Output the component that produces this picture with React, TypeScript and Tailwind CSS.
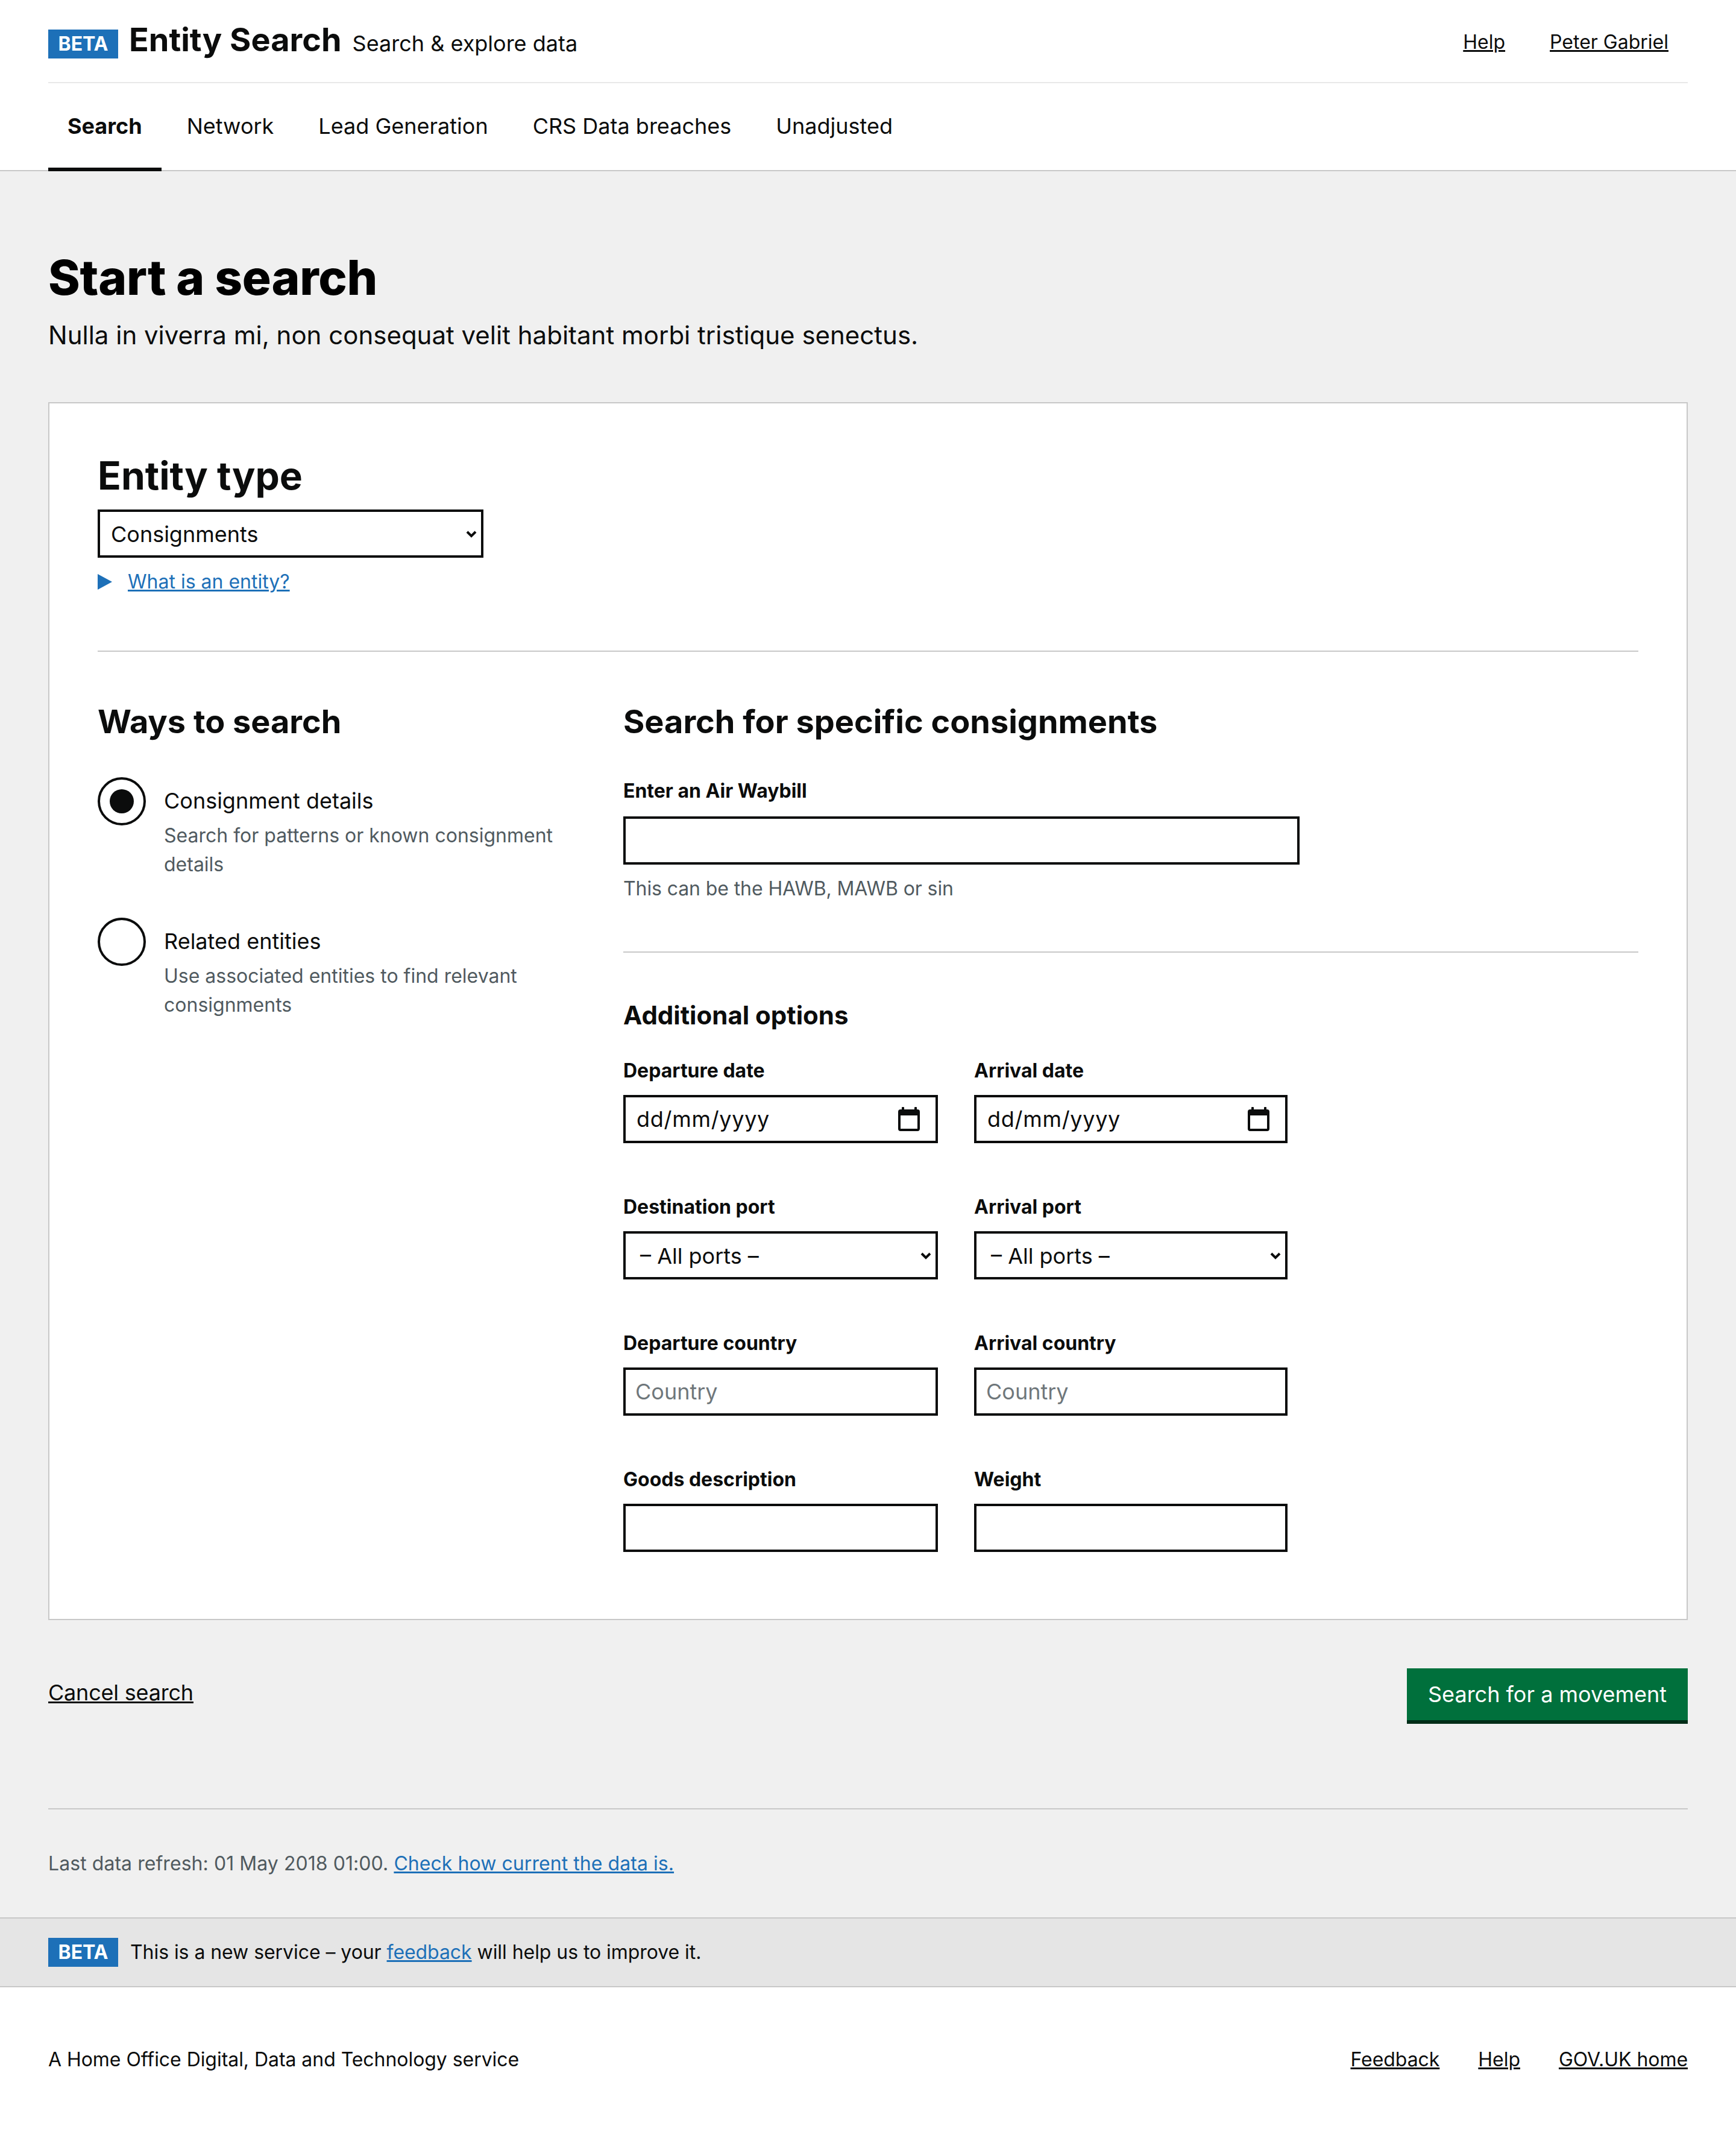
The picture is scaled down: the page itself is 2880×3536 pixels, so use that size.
import React from "react";

const Beta = () => (
  <span className="inline-flex h-[48px] w-[116px] shrink-0 items-center justify-center bg-[#1d70b8] text-[32px] font-bold leading-none text-white">BETA</span>
);

const Chevron = () => (
  <svg className="pointer-events-none h-[14px] w-[18px] shrink-0" viewBox="0 0 18 14" fill="none">
    <path d="M2 4 L9 11 L16 4" stroke="#0b0c0c" strokeWidth="4" />
  </svg>
);

const Calendar = () => (
  <svg className="h-[40px] w-[36px] shrink-0" viewBox="0 0 36 40" fill="none">
    <rect x="0" y="4" width="36" height="36" rx="4" fill="#0b0c0c" />
    <rect x="6" y="0" width="4" height="6" rx="1" fill="#0b0c0c" />
    <rect x="27" y="0" width="4" height="6" rx="1" fill="#0b0c0c" />
    <rect x="4" y="14" width="28" height="22" fill="#fff" />
  </svg>
);

const Select = ({ label, w, px }: { label: string; w: string; px: string }) => (
  <div className={`flex h-[80px] items-center justify-between border-4 border-[#0b0c0c] bg-white pr-[7px] ${w} ${px}`}>
    <span className="pt-[2px] text-[36px] leading-none text-[#0b0c0c]">{label}</span>
    <Chevron />
  </div>
);

const Field = ({ label, children }: { label: string; children: React.ReactNode }) => (
  <div>
    <div className="mb-[16px] h-[48px] text-[32px] font-bold leading-[48px] text-[#0b0c0c]">{label}</div>
    {children}
  </div>
);

const TextBox = ({ placeholder = "" }: { placeholder?: string }) => (
  <input
    placeholder={placeholder}
    className="block h-[80px] w-full border-4 border-[#0b0c0c] bg-white px-[16px] text-[36px] text-[#0b0c0c] outline-none placeholder:text-[#6f777b]"
  />
);

const DateBox = () => (
  <div className="flex h-[80px] items-center justify-between border-4 border-[#0b0c0c] bg-white pl-[18px] pr-[26px]">
    <input readOnly defaultValue="dd/mm/yyyy" className="w-[300px] bg-transparent text-[36px] tracking-[0.7px] text-[#0b0c0c] outline-none" />
    <Calendar />
  </div>
);

const Radio = ({ checked, title, desc }: { checked?: boolean; title: string; desc: React.ReactNode }) => (
  <div className="flex gap-[30px]">
    <span className="flex h-[80px] w-[80px] shrink-0 items-center justify-center rounded-full border-4 border-[#0b0c0c] bg-white">
      {checked && <span className="h-[40px] w-[40px] rounded-full bg-[#0b0c0c]" />}
    </span>
    <div className="pt-[15px]">
      <div className="h-[48px] text-[36px] leading-[48px] text-[#0b0c0c]">{title}</div>
      <div className="mt-[10px] text-[32px] leading-[48px] text-[#505a5f]">{desc}</div>
    </div>
  </div>
);

export default function App() {
  return (
    <div className="flex min-h-[3536px] flex-col bg-white text-[#0b0c0c]" style={{ fontFamily: "Inter, 'Liberation Sans', sans-serif" }}>
      <header className="border-b-2 border-[#c8c8c8] bg-white">
        <div className="mx-[80px] flex h-[138px] items-center justify-between border-b-2 border-[#e8e8e8] pr-[32px]">
          <div className="flex items-baseline">
            <span className="mt-[10px] self-center"><Beta /></span>
            <span className="ml-[18px] text-[54px] font-bold leading-none">Entity Search</span>
            <span className="ml-[18px] text-[36px] leading-none">Search &amp; explore data</span>
          </div>
          <div className="mt-[4px] flex gap-[74px] text-[32px]">
            <a className="underline">Help</a>
            <a className="underline">Peter Gabriel</a>
          </div>
        </div>
        <nav className="mx-[80px] -mb-[4px] flex h-[148px] text-[36px]">
          <a className="flex items-center border-b-[8px] border-[#0b0c0c] px-[32px] pt-[2px] font-bold">Search</a>
          <a className="flex items-center border-b-[8px] border-transparent pl-[42px] pr-[74px] pt-[2px]">Network</a>
          <a className="flex items-center border-b-[8px] border-transparent pr-[74px] pt-[2px]">Lead Generation</a>
          <a className="flex items-center border-b-[8px] border-transparent pr-[74px] pt-[2px]">CRS Data breaches</a>
          <a className="flex items-center border-b-[8px] border-transparent pt-[2px]">Unadjusted</a>
        </nav>
      </header>

      <main className="flex-1 bg-[#f0f0f0] px-[80px] pt-[132px]">
        <h1 className="text-[80px] font-extrabold leading-[88px] tracking-[-0.3px] text-black">Start a search</h1>
        <p className="mt-[22px] text-[42px] leading-[60px]">Nulla in viverra mi, non consequat velit habitant morbi tristique senectus.</p>

        <section className="mt-[81px] h-[2020px] border-2 border-[#c8c8c8] bg-white px-[80px] pt-[84px]">
          <h2 className="text-[64px] font-bold leading-[72px]">Entity type</h2>
          <div className="mt-[20px]"><Select label="Consignments" w="w-[640px]" px="pl-[18px]" /></div>
          <div className="mt-[16px] flex items-center text-[32px] leading-[48px] text-[#1d70b8]">
            <svg className="h-[26px] w-[24px]" viewBox="0 0 24 26"><path d="M0 0 L24 13 L0 26 Z" fill="#1d70b8" /></svg>
            <a className="ml-[26px] underline">What is an entity?</a>
          </div>

          <div className="mt-[90px] border-t-2 border-[#c8c8c8]" />

          <div className="mt-[80px] flex">
            <div className="w-[872px] pr-[100px]">
              <h2 className="text-[54px] font-bold leading-[72px]">Ways to search</h2>
              <div className="mt-[56px] flex flex-col gap-[64px]">
                <Radio checked title="Consignment details" desc="Search for patterns or known consignment details" />
                <Radio title="Related entities" desc="Use associated entities to find relevant consignments" />
              </div>
            </div>
            <div className="flex-1">
              <h2 className="text-[54px] font-bold leading-[72px]">Search for specific consignments</h2>
              <div className="mt-[55px] h-[48px] text-[32px] font-bold leading-[48px]">Enter an Air Waybill</div>
              <div className="mt-[18px] w-[1122px]"><TextBox /></div>
              <div className="mt-[16px] text-[32px] leading-[48px] tracking-[-0.1px] text-[#505a5f]">This can be the HAWB, MAWB or sin</div>
              <div className="mt-[80px] border-t-2 border-[#c8c8c8]" />
              <h3 className="mt-[76px] text-[42px] font-bold leading-[56px]">Additional options</h3>
              <div className="mt-[40px] grid w-[1102px] grid-cols-[522px_520px] gap-x-[60px] gap-y-[82px]">
                <Field label="Departure date"><DateBox /></Field>
                <Field label="Arrival date"><DateBox /></Field>
                <Field label="Destination port"><Select label="– All ports –" w="w-full" px="pl-[24px]" /></Field>
                <Field label="Arrival port"><Select label="– All ports –" w="w-full" px="pl-[24px]" /></Field>
                <Field label="Departure country"><TextBox placeholder="Country" /></Field>
                <Field label="Arrival country"><TextBox placeholder="Country" /></Field>
                <Field label="Goods description"><TextBox /></Field>
                <Field label="Weight"><TextBox /></Field>
              </div>
            </div>
          </div>
        </section>

        <div className="mt-[80px] flex items-start justify-between">
          <a className="mt-[16px] text-[36px] leading-[48px] tracking-[-0.2px] underline decoration-[#0b0c0c]">Cancel search</a>
          <button className="h-[92px] w-[466px] border-b-[6px] border-[#002d18] bg-[#00703c] text-[36px] text-white">Search for a movement</button>
        </div>

        <div className="mt-[140px] border-t-2 border-[#c8c8c8]" />
        <p className="mt-[66px] text-[32px] leading-[48px] tracking-[0.06px] text-[#505a5f]">
          Last data refresh: 01 May 2018 01:00. <a className="text-[#1d70b8] underline">Check how current the data is.</a>
        </p>
        <div className="h-[30px]" />
      </main>

      <div className="flex h-[116px] items-center border-y-2 border-[#c8c8c8] bg-[#e5e5e5] px-[80px] text-[32px] tracking-[-0.06px]">
        <Beta />
        <span className="ml-[20px]">This is a new service – your <a className="text-[#1d70b8] underline">feedback</a> will help us to improve it.</span>
      </div>

      <footer className="flex h-[240px] items-center justify-between bg-white px-[80px] text-[32px] tracking-[-0.05px]">
        <span>A Home Office Digital, Data and Technology service</span>
        <div className="flex gap-[64px]">
          <a className="underline">Feedback</a>
          <a className="underline">Help</a>
          <a className="underline">GOV.UK home</a>
        </div>
      </footer>
    </div>
  );
}
